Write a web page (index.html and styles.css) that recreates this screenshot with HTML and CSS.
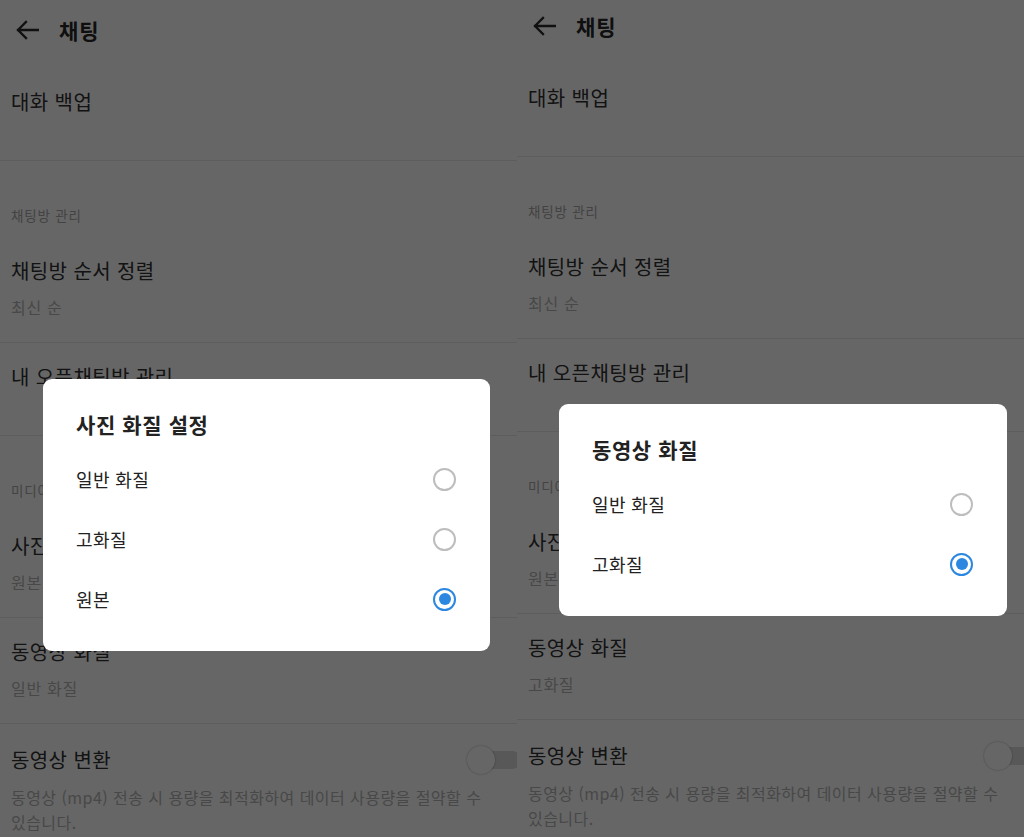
FILE: index.html
```html
<!DOCTYPE html>
<html lang="ko">
<head>
<meta charset="utf-8">
<title>채팅 설정</title>
<link rel="stylesheet" href="styles.css">
</head>
<body>
<div class="frame">
  <section class="panel panel-a">
    <div class="screen">
      <header class="appbar">
        <svg class="back" width="24" height="20" viewBox="0 0 24 20" aria-hidden="true"><path d="M23 10H3M11 2L3 10L11 18" fill="none" stroke="#2a2a2a" stroke-width="2.3" stroke-linecap="square"/></svg>
        <h1 class="appbar-title">채팅</h1>
      </header>
      <div class="item single"><div class="item-title">대화 백업</div></div>
      <div class="section">채팅방 관리</div>
      <div class="item"><div class="item-title">채팅방 순서 정렬</div><div class="item-sub">최신 순</div></div>
      <div class="item single"><div class="item-title">내 오픈채팅방 관리</div></div>
      <div class="section">미디어</div>
      <div class="item"><div class="item-title">사진 화질</div><div class="item-sub">원본</div></div>
      <div class="item"><div class="item-title">동영상 화질</div><div class="item-sub">일반 화질</div></div>
      <div class="item toggle-item">
        <div class="toggle-row"><div class="item-title">동영상 변환</div><span class="switch"><span class="knob"></span></span></div>
        <div class="item-desc">동영상 (mp4) 전송 시 용량을 최적화하여 데이터 사용량을 절약할 수 있습니다.</div>
      </div>
      <div class="scrim"></div>
      <div class="dialog dialog-a">
        <h2 class="dialog-title">사진 화질 설정</h2>
        <div class="option"><span>일반 화질</span><span class="radio"></span></div>
        <div class="option"><span>고화질</span><span class="radio"></span></div>
        <div class="option"><span>원본</span><span class="radio on"></span></div>
      </div>
    </div>
  </section>
  <section class="panel panel-b">
    <div class="screen">
      <header class="appbar">
        <svg class="back" width="24" height="20" viewBox="0 0 24 20" aria-hidden="true"><path d="M23 10H3M11 2L3 10L11 18" fill="none" stroke="#2a2a2a" stroke-width="2.3" stroke-linecap="square"/></svg>
        <h1 class="appbar-title">채팅</h1>
      </header>
      <div class="item single"><div class="item-title">대화 백업</div></div>
      <div class="section">채팅방 관리</div>
      <div class="item"><div class="item-title">채팅방 순서 정렬</div><div class="item-sub">최신 순</div></div>
      <div class="item single"><div class="item-title">내 오픈채팅방 관리</div></div>
      <div class="section">미디어</div>
      <div class="item"><div class="item-title">사진 화질</div><div class="item-sub">원본</div></div>
      <div class="item"><div class="item-title">동영상 화질</div><div class="item-sub">고화질</div></div>
      <div class="item toggle-item">
        <div class="toggle-row"><div class="item-title">동영상 변환</div><span class="switch"><span class="knob"></span></span></div>
        <div class="item-desc">동영상 (mp4) 전송 시 용량을 최적화하여 데이터 사용량을 절약할 수 있습니다.</div>
      </div>
      <div class="scrim"></div>
      <div class="dialog dialog-b">
        <h2 class="dialog-title">동영상 화질</h2>
        <div class="option"><span>일반 화질</span><span class="radio"></span></div>
        <div class="option"><span>고화질</span><span class="radio on"></span></div>
      </div>
    </div>
  </section>
</div>
</body>
</html>
```

FILE: styles.css
```css
* { box-sizing: border-box; }
html, body { margin: 0; padding: 0; }
body {
  width: 1024px;
  height: 837px;
  overflow: hidden;
  background: #666;
  font-family: "Noto Sans CJK KR", "Noto Sans", sans-serif;
}
.frame { display: flex; width: 1024px; height: 837px; }
.panel { position: relative; overflow: hidden; height: 837px; flex: none; }
.panel-a { width: 517px; }
.panel-b { width: 507px; }
.screen {
  position: relative;
  width: 533px;
  height: 900px;
  background: #fff;
}
.panel-b .screen { margin-top: -4px; }

.appbar {
  display: flex;
  align-items: center;
  height: 68px;
  padding: 0 0 8px 15px;
}
.back { flex: none; }
.appbar-title {
  margin: 0 0 0 20px;
  font-size: 21px;
  font-weight: 700;
  letter-spacing: 1px;
  color: #262626;
  line-height: 28px;
}

.item {
  padding: 21px 11px 24px;
  border-bottom: 1px solid #e8e8e8;
}
.item.single { padding-bottom: 45px; }
.item-title {
  font-size: 20px;
  letter-spacing: 0.4px;
  line-height: 26px;
  color: #303030;
}
.item-sub {
  margin-top: 12px;
  font-size: 16px;
  letter-spacing: 0.7px;
  line-height: 22px;
  color: #b4b4b4;
}
.section {
  padding: 45px 11px 13px;
  font-size: 13.5px;
  letter-spacing: 0.8px;
  line-height: 18px;
  color: #a8a8a8;
}
.toggle-item { border-bottom: none; padding-top: 23px; padding-right: 15px; }
.toggle-row {
  display: flex;
  align-items: center;
  justify-content: space-between;
}
.item-desc {
  margin-top: 12px;
  max-width: 492px;
  font-size: 16px;
  letter-spacing: 0.45px;
  line-height: 25px;
  color: #b4b4b4;
  word-break: keep-all;
}
.switch {
  position: relative;
  width: 48px;
  height: 18px;
  border-radius: 9px;
  background: #dcdcdc;
  margin-right: -3px;
}
.knob {
  position: absolute;
  left: -6px;
  top: -5px;
  width: 28px;
  height: 28px;
  border-radius: 50%;
  background: #fff;
  box-shadow: 0 0 2px rgba(0,0,0,0.35);
}

.scrim {
  position: absolute;
  inset: 0;
  background: rgba(0,0,0,0.6);
}
.dialog {
  position: absolute;
  left: 43px;
  width: 447px;
  background: #fff;
  border-radius: 9px;
  padding: 31px 34px 22px 33px;
}
.dialog-a { top: 379px; }
.dialog-b { top: 408px; left: 42px; width: 448px; }
.dialog-title {
  margin: 0 0 11px;
  font-size: 21px;
  font-weight: 700;
  letter-spacing: 0.6px;
  line-height: 28px;
  color: #222;
}
.option {
  display: flex;
  align-items: center;
  justify-content: space-between;
  height: 60px;
  font-size: 18px;
  letter-spacing: 0.4px;
  color: #222;
}
.radio {
  width: 23px;
  height: 23px;
  border-radius: 50%;
  border: 2px solid #bdbdbd;
  display: flex;
  align-items: center;
  justify-content: center;
}
.radio.on { border: 2.5px solid #2b87e0; }
.radio.on::after {
  content: "";
  width: 12px;
  height: 12px;
  border-radius: 50%;
  background: #2b87e0;
}
```
